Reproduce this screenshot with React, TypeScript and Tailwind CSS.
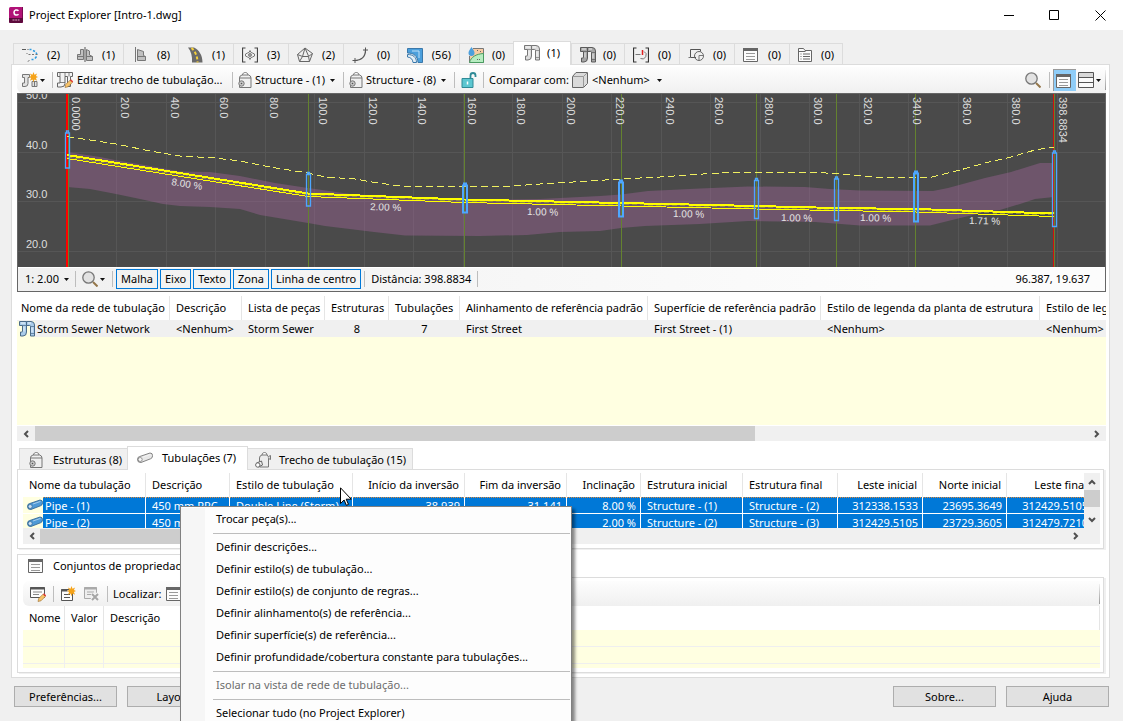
import type { ReactNode } from 'react';

/* ---------- icons ---------- */

type SvgProps = { children: ReactNode; className?: string };

function Icon({ children, className = 'h-4 w-4' }: SvgProps) {
  return (
    <svg viewBox="0 0 16 16" fill="none" className={`shrink-0 ${className}`} aria-hidden="true">
      {children}
    </svg>
  );
}

const AlignmentIcon = () => (
  <Icon>
    <path d="M0 2.500h4M5.500 2.500h1" stroke="#5a5a5a" />
    <path d="M7.500 2.500h2M11 3.500l2 1M14 5.500l1 2M14.500 9.500l-1.500 2M11.500 12.500h-2" stroke="#2d9be0" strokeWidth="1.500" />
    <path d="M6.500 7.500h9M7.500 13.500l-2 1M4.500 6.500h1" stroke="#777" strokeDasharray="2 1.500" />
  </Icon>
);

const AssemblyIcon = () => (
  <Icon>
    <path d="M8 0v15" stroke="#555" />
    <path d="M6.500 2.500h-3v5h-3v5h6zM9.500 2.500l3 1.500v4l3 1.500v4h-6z" fill="#c0c0c0" stroke="#777" />
    <path d="M.5 9.500h6M9.500 9.500h6" stroke="#777" />
  </Icon>
);

const SubassemblyIcon = () => (
  <Icon>
    <path d="M3.500 0v15" stroke="#777" />
    <path d="M5.500 2.500l6 2v4l2 1v4h-8z" fill="#c0c0c0" stroke="#777" />
    <path d="M5.500 9.500h8" stroke="#777" />
  </Icon>
);

const CorridorIcon = () => (
  <Icon>
    <path d="M1 .500h6C12 3 15.500 8 15.500 15.500H5C5.500 9 4 4 1 .500z" fill="#6a6a6a" />
    <path d="M4.500 1c3.500 3 6 8 6 14.500" stroke="#f5cf3a" strokeWidth="2" strokeDasharray="3 2" />
  </Icon>
);

const IntersectionIcon = () => (
  <Icon>
    <path d="M3.500 1h-3v14h3M12.500 1h3v14h-3" stroke="#444" strokeWidth="1.200" />
    <path d="M8 3.500l1 2 1.500.5 2 1v2l-2 1-1.500.5-1 2-1-2-1.500-.5-2-1V7l2-1L7 5.500z" stroke="#777" />
    <circle cx="8" cy="8" r="1.300" stroke="#555" />
  </Icon>
);

const SurfaceIcon = () => (
  <Icon>
    <path d="M8 1l7.500 5.500L12.500 14.500h-10L.5 7.500zM8 1L5.500 9.500M5.500 9.500L.5 7.500M8 1l3.500 8M5.500 9.500h6l4-3M5.500 9.500l-3 5M11.500 9.500l1 5" stroke="#666" />
  </Icon>
);

const CurveIcon = () => (
  <Icon>
    <path d="M3 13.500C9 13.500 13.500 10 13.500 3" stroke="#555" strokeWidth="1.200" />
    <path d="M.5 13.500h5M3 11v5M11 3h5M13.500.500v5" stroke="#555" />
  </Icon>
);

const CatchmentIcon = () => (
  <Icon>
    <path d="M.5 1.500h15v14h-4.500C10.500 9 7 6 .5 6z" fill="#4b9fdc" stroke="#3a78aa" />
    <path d="M.5 7.500C6 7.500 9.500 10 9.500 15.500H6C5.500 12 4 10.500.5 10z" fill="#e4eef6" stroke="#3a78aa" />
    <path d="M5 4h7v7" stroke="#bfe0f7" />
  </Icon>
);

const WaterIcon = () => (
  <Icon>
    <path d="M5 1.500h10.500v14H1.500V9" fill="#f7cba4" stroke="#777" />
    <path d="M1.500 15.500C3 10 8 7 15.500 6.500v9z" fill="#b6ecc0" stroke="#4a9a60" />
    <path d="M9 3.500h1M12 4.500h1M9 12.500h3" stroke="#666" strokeDasharray="1 1" />
    <path d="M3.500 0C1.500 3 .5 4.200.5 6a3 3 0 006 0C6.500 4.200 5.500 3 3.500 0z" fill="#4b9fdc" />
  </Icon>
);

function PipeNetIcon({ fill, stroke, className }: { fill: string; stroke: string; className?: string }) {
  return (
    <Icon className={className}>
      <path d="M.5.500h7v10.500q0 4-3.500 4H1.500v-4H3q.5 0 .5-.5V4.500H.5z" fill={fill} stroke={stroke} />
      <path d="M7.500.500H12q3.500 0 3.500 3.500v11h-4V5.500q0-1-1-1h-3z" fill={fill} stroke={stroke} />
      <path d="M3.500 4.500h4M11.500 5.500h4M11.500 12.500h4" stroke={stroke} strokeWidth=".7" />
      <path d="M5 5.500v5M13 6.500v5M2 2h4M9 2h3" stroke="#fff" strokeOpacity=".8" />
    </Icon>
  );
}

const BracketRunIcon = () => (
  <Icon>
    <path d="M3.500 1h-3v14h3M12.500 1h3v14h-3" stroke="#333" strokeWidth="1.200" />
    <path d="M2.500 7.500h5M11 4.500a3.800 3.800 0 11-3.500 7" stroke="#777" />
    <path d="M9.500 3v5" stroke="#e02020" strokeWidth="1.500" />
  </Icon>
);

const ShapesIcon = () => (
  <Icon>
    <path d="M8 10.500H2.500v-8h10v2" stroke="#555" />
    <circle cx="11" cy="9" r="4.500" stroke="#666" />
    <path d="M.5 10.500h2M11 8.500v5M11 8.500h4.500" stroke="#777" />
  </Icon>
);

const ListIcon = ({ className }: { className?: string }) => (
  <Icon className={className}>
    <path d="M.5 1.500h14v13H.5z" fill="#fcfcfc" stroke="#666" />
    <path d="M0 1h15v3H0z" fill="#666" />
    <path d="M3 6.500h9M3 9.500h9M3 12.500h9" stroke="#999" />
  </Icon>
);

const FolderListIcon = () => (
  <Icon>
    <path d="M.5 14.500V1.500h5l1.500 2h6.500v11z" fill="#fcfcfc" stroke="#666" />
    <path d="M.5 4.500h7" stroke="#666" />
    <path d="M2.500 7h1M5 7h7M2.500 9.500h1M5 9.500h7M2.500 12h1M5 12h7" stroke="#666" />
  </Icon>
);

const Star = () => (
  <path
    d="M11.500 0l1 2.700 2.600-1.200-1.200 2.600 2.100 1-2.100 1 1.200 2.600-2.600-1.200-1 2.700-1-2.700-2.600 1.200 1.200-2.600L7 5.100l2.100-1L7.900 1.500l2.600 1.200z"
    fill="#f5a31a"
  />
);

const Pencil = () => (
  <>
    <path d="M8 15.500l.7-3L13 8.200l2.300 2.300-4.300 4.300z" fill="#f7c46a" stroke="#9a6a28" strokeWidth=".6" />
    <path d="M13 8.200l1-1 2.300 2.300-1 1z" fill="#e53935" />
  </>
);

const NewNetworkIcon = () => (
  <Icon>
    <path d="M.5 2.500h7v3H6v6q0 3-3 3H.5V11h2V5.500h-2z" fill="#e2e2e2" stroke="#777" />
    <path d="M10 9.500h5v5h-5zM12.500 9.500v5" fill="#e2e2e2" stroke="#777" />
    <Star />
  </Icon>
);

const EditRunIcon = () => (
  <Icon>
    <path d="M.5.500h15v4h-2v10h-3v-10H8v7q0 3.500-4 3.500H.5v-4H3V4.500H.5z" fill="#f3f3f3" stroke="#666" />
    <path d="M3 .500v4M8 .500v4M12 .500v4M3 10.500h5" stroke="#666" strokeWidth=".8" />
    <Pencil />
  </Icon>
);

const StructureIcon = () => (
  <Icon>
    <path d="M5.500 3C5.500-.3 11 -.3 11 3" stroke="#777" fill="#fff" />
    <path d="M2.500 6q0-2.500 2.500-3h6.500q2.500.5 2.500 3v9.500h-11.500z" fill="#f0f0f0" stroke="#777" />
    <path d="M2.500 6h11.500" stroke="#777" />
    <circle cx="4.500" cy="11.500" r="2.700" fill="#c9c9c9" stroke="#777" />
    <circle cx="4.500" cy="11.500" r=".8" fill="#555" />
  </Icon>
);

const RunIcon = () => (
  <Icon>
    <path d="M7 3c0-3.300 5-3.300 5 0" stroke="#777" fill="#fff" />
    <path d="M4.500 6q0-2.500 2.500-3h5q1.500.5 1.500 3v9h-9z" fill="#ececec" stroke="#777" />
    <path d="M13.500 4.500l2-1v4l-2-1" fill="#ddd" stroke="#777" />
    <path d="M1.500 11l5-2 1 4-4 2z" fill="#eee" stroke="#666" />
    <circle cx="2.800" cy="13" r="2.200" fill="#fff" stroke="#666" />
  </Icon>
);

const PipeIcon = ({ fill, stroke }: { fill: string; stroke: string }) => (
  <Icon>
    <path d="M2.800 6.500L13 3q2.600 0 2.600 2.600t-2.100 3.200L4 12.500Q.5 12.700.5 9.700T2.800 6.500z" fill={fill} stroke={stroke} strokeWidth=".8" />
    <circle cx="3.200" cy="9.500" r="2" fill="#fff" fillOpacity=".7" stroke={stroke} strokeWidth=".6" />
    <path d="M6 7l7.500-2.600" stroke="#fff" strokeOpacity=".5" />
  </Icon>
);

const LockIcon = () => (
  <Icon>
    <path d="M9.500 6V3.500a2.500 2.500 0 015 0V5" stroke="#2f8a96" strokeWidth="1.800" />
    <path d="M1 6.500h11v9H1z" fill="#5cc6d0" stroke="#2f8a96" />
    <path d="M6.500 9.500v3" stroke="#fff" strokeWidth="1.500" />
  </Icon>
);

const CubeIcon = () => (
  <Icon>
    <path d="M.5 4.500l3.500-4h11.500v11l-4 4H.5z" fill="#dadada" stroke="#666" />
    <path d="M.8 4.500h10.700l4-4M11.500 4.500v11" stroke="#999" />
  </Icon>
);

const SearchIcon = () => (
  <Icon>
    <path d="M11 11l4.500 4.500" stroke="#94764a" strokeWidth="2" />
    <circle cx="6.500" cy="6.500" r="5.700" fill="#e2e2e2" stroke="#777" strokeWidth="1.300" />
  </Icon>
);

const RowsIcon = () => (
  <Icon>
    <path d="M.5.500h15v15H.5z" fill="#fafafa" stroke="#555" />
    <path d="M1 1h14v4.500H1z" fill="#d8d8d8" />
    <path d="M.5 5.500h15M.5 10.500h15" stroke="#555" />
  </Icon>
);

const EditListIcon = () => (
  <Icon>
    <path d="M.5 1.500h14v10H.5z" fill="#fcfcfc" stroke="#555" />
    <path d="M.5 1h14v2.500H.5z" fill="#555" />
    <path d="M3 6h9M3 8.500h6" stroke="#888" />
    <Pencil />
  </Icon>
);

const NewListIcon = () => (
  <Icon>
    <path d="M1.500 3.500h11v11h-11z" fill="#fcfcfc" stroke="#555" />
    <path d="M1.500 3h6v2.500h-6z" fill="#555" />
    <path d="M4 8.500h6M4 11.500h6" stroke="#555" />
    <Star />
  </Icon>
);

const DeleteListIcon = () => (
  <Icon>
    <path d="M.5 1.500h12v11H.5z" fill="#eee" stroke="#aaa" />
    <path d="M.5 1h12v2.500H.5z" fill="#aaa" />
    <path d="M3 6h7M3 8.500h4" stroke="#aaa" />
    <path d="M8 8l6 6M14 8l-6 6" stroke="#f4f4f4" strokeWidth="4" />
    <path d="M8 8l6 6M14 8l-6 6" stroke="#a5a5a5" strokeWidth="2" />
  </Icon>
);

const Caret = () => (
  <svg viewBox="0 0 5 3" className="pointer-events-none h-[3px] w-[5px] shrink-0" aria-hidden="true">
    <path d="M0 0h5L2.500 3z" fill="#111" />
  </svg>
);

function Chevron({ d }: { d: string }) {
  return (
    <svg viewBox="0 0 8 8" className="h-2 w-2" fill="none" aria-hidden="true">
      <path d={d} stroke="#505050" strokeWidth="2" />
    </svg>
  );
}

const Divider = () => <span className="block h-4 w-px shrink-0 bg-[#bdbdbd]" />;

/* ---------- title bar ---------- */

function TitleBar() {
  return (
    <header className="flex h-[30px] shrink-0 items-center bg-white pl-[9px]">
      <svg viewBox="0 0 14 16" className="h-4 w-3.5 shrink-0" aria-hidden="true">
        <rect width="14" height="16" rx="1.500" fill="#b01277" />
        <path d="M0 11h14v3.500a1.500 1.500 0 01-1.500 1.500h-11A1.500 1.500 0 010 14.500z" fill="#5c0a3c" />
        <path d="M13 0h1v11h-1z" fill="#7a0a50" />
        <path d="M9.500 3.800C8 2.300 5 2.800 5 5.500s3 3.200 4.500 1.700" fill="none" stroke="#fff" strokeWidth="1.600" />
        <path d="M3.500 13h7" stroke="#d9a8c6" strokeDasharray="2 .7" />
      </svg>
      <h1 className="ml-1.5 flex-1">Project Explorer [Intro-1.dwg]</h1>
      <button aria-label="Minimizar" className="flex h-full w-[46px] items-center justify-center">
        <svg viewBox="0 0 11 11" className="h-[11px] w-[11px]"><path d="M1 5.500h10" stroke="#000" /></svg>
      </button>
      <button aria-label="Maximizar" className="flex h-full w-[46px] items-center justify-center">
        <svg viewBox="0 0 11 11" className="h-[11px] w-[11px]"><path d="M.5.500h9v9h-9z" fill="none" stroke="#000" /></svg>
      </button>
      <button aria-label="Fechar" className="flex h-full w-[46px] items-center justify-center">
        <svg viewBox="0 0 11 11" className="h-[11px] w-[11px]"><path d="M.5.500l10 10M10.500.500l-10 10" stroke="#000" /></svg>
      </button>
    </header>
  );
}

/* ---------- category tabs ---------- */

const pipeGrey = <PipeNetIcon fill="#dcdcdc" stroke="#777" />;
const pipeDark = <PipeNetIcon fill="#a6a6a6" stroke="#5a5a5a" />;

const categories: { name: string; count: number; icon: ReactNode; width: string }[] = [
  { name: 'Alinhamentos', count: 2, icon: <AlignmentIcon />, width: 'w-[55px]' },
  { name: 'Montagens', count: 1, icon: <AssemblyIcon />, width: 'w-[55px]' },
  { name: 'Submontagens', count: 8, icon: <SubassemblyIcon />, width: 'w-[55px]' },
  { name: 'Corredores', count: 1, icon: <CorridorIcon />, width: 'w-[55px]' },
  { name: 'Interseções', count: 3, icon: <IntersectionIcon />, width: 'w-[55px]' },
  { name: 'Superfícies', count: 2, icon: <SurfaceIcon />, width: 'w-[55px]' },
  { name: 'Linhas de recurso', count: 0, icon: <CurveIcon />, width: 'w-[55px]' },
  { name: 'Áreas', count: 56, icon: <CatchmentIcon />, width: 'w-[61px]' },
  { name: 'Bacias', count: 0, icon: <WaterIcon />, width: 'w-[54px]' },
  { name: 'Redes de tubulação', count: 1, icon: pipeGrey, width: 'w-[58px]' },
  { name: 'Redes de pressão', count: 0, icon: pipeDark, width: 'w-[53px]' },
  { name: 'Trechos', count: 0, icon: <BracketRunIcon />, width: 'w-[55px]' },
  { name: 'Formas', count: 0, icon: <ShapesIcon />, width: 'w-[55px]' },
  { name: 'Conjuntos', count: 0, icon: <ListIcon />, width: 'w-[55px]' },
  { name: 'Pastas', count: 0, icon: <FolderListIcon />, width: 'w-[54px]' },
];

function CategoryTabs() {
  return (
    <div role="tablist" className="flex shrink-0 items-end pt-[11px] pl-[2px]">
      {categories.map((c) =>
        c.name === 'Redes de tubulação' ? (
          <button key={c.name} role="tab" aria-selected="true" aria-label={c.name}
            className={`relative -mb-px flex h-6 items-center justify-between border-x border-t border-[#dcdcdc] bg-white pr-2.5 pb-0.5 pl-2.5 ${c.width}`}>
            {c.icon}
            <span>({c.count})</span>
          </button>
        ) : (
          <button key={c.name} role="tab" aria-selected="false" aria-label={c.name}
            className={`flex h-[21px] items-center justify-between border-t border-l border-[#dcdcdc] pt-0.5 pr-2 pl-2 last:border-r ${c.width}`}>
            {c.icon}
            <span>({c.count})</span>
          </button>
        ),
      )}
    </div>
  );
}

/* ---------- toolbar ---------- */

function Picker({ id, label, value, width }: { id: string; label: string; value: string; width: string }) {
  return (
    <span className="flex items-center">
      <select id={id} aria-label={label} className={`appearance-none bg-transparent ${width}`}>
        <option>{value}</option>
      </select>
      <Caret />
    </span>
  );
}

function MainToolbar() {
  return (
    <div className="flex h-[26px] shrink-0 items-center rounded-l-md bg-linear-to-b from-[#fdfdfd] to-[#f0f0f0] pl-[5px]">
      <div className="flex w-[30px] items-center">
        <button aria-label="Nova rede" className="flex items-center gap-0.5"><NewNetworkIcon /><Caret /></button>
      </div>
      <Divider />
      <div className="flex w-[179px] items-center pl-1">
        <button className="flex items-center gap-1 whitespace-nowrap"><EditRunIcon />Editar trecho de tubulação...</button>
      </div>
      <Divider />
      <div className="flex w-[110px] items-center gap-0.5 pl-1"><StructureIcon /><Picker id="from" label="Estrutura inicial" value="Structure - (1)" width="w-[75px]" /></div>
      <Divider />
      <div className="flex w-[110px] items-center gap-0.5 pl-1"><StructureIcon /><Picker id="to" label="Estrutura final" value="Structure - (8)" width="w-[75px]" /></div>
      <Divider />
      <div className="flex w-7 items-center pl-1.5"><button aria-label="Bloquear"><LockIcon /></button></div>
      <Divider />
      <label htmlFor="compare" className="w-[88px] pl-[5px] whitespace-nowrap">Comparar com:</label>
      <div className="flex items-center gap-1"><CubeIcon /><Picker id="compare" label="Comparar com" value="<Nenhum>" width="w-[65px]" /></div>
      <button aria-label="Pesquisar" className="ml-auto"><SearchIcon /></button>
      <span className="ml-2"><Divider /></span>
      <button aria-label="Lista" aria-pressed="true" className="ml-[3px] flex h-[22px] w-[23px] items-center justify-center border-t border-l border-[#999] bg-[#8fcdf8] pr-0.5"><ListIcon /></button>
      <button aria-label="Layout" className="ml-0.5 flex items-center gap-0.5"><RowsIcon /><Caret /></button>
      <span className="ml-1 h-5 w-px bg-linear-to-b from-[#f0f0f0] to-[#999]" />
    </div>
  );
}

/* ---------- profile view ---------- */

const gridX = [116, 166, 215, 265, 314, 364, 413, 463, 512, 562, 611, 661, 710, 760, 809, 859, 908, 958, 1007, 1057];
const gridY = [102, 152, 201, 251];
const greenX = [308, 464, 621, 756, 836, 915];
const stations: [number, string][] = [
  [72, '0.0000'], [121, '20.0'], [171, '40.0'], [220, '60.0'], [270, '80.0'], [319, '100.0'], [369, '120.0'],
  [418, '140.0'], [468, '160.0'], [517, '180.0'], [567, '200.0'], [616, '220.0'], [666, '240.0'], [715, '260.0'],
  [765, '280.0'], [814, '300.0'], [864, '320.0'], [913, '340.0'], [963, '360.0'], [1012, '380.0'], [1059, '398.8834'],
];
const elevations: [number, string][] = [[99, '50.0'], [149, '40.0'], [198, '30.0'], [248, '20.0']];
const structures: { x: number; top: number; bottom: number; weight: number }[] = [
  { x: 67.5, top: 133, bottom: 168, weight: 1.3 },
  { x: 308.5, top: 174.5, bottom: 206, weight: 1.3 },
  { x: 465, top: 185.5, bottom: 212.5, weight: 2 },
  { x: 621, top: 182.5, bottom: 216.5, weight: 2 },
  { x: 756.5, top: 180.5, bottom: 218.5, weight: 1.3 },
  { x: 836.5, top: 179, bottom: 220.5, weight: 1.3 },
  { x: 916, top: 173.5, bottom: 221.5, weight: 2 },
  { x: 1054.5, top: 153, bottom: 226.5, weight: 1.3 },
];
const slopes: [number, number, number, string][] = [
  [171, 185, 9, '8.00 %'], [370, 210, 2, '2.00 %'], [527, 215, 1, '1.00 %'], [673, 217, 1, '1.00 %'],
  [781, 221, 1, '1.00 %'], [860, 221, 1, '1.00 %'], [969, 224, 1, '1.71 %'],
];

function ProfileView() {
  return (
    <svg viewBox="18 94 1087 173" preserveAspectRatio="xMinYMin slice" className="block h-[173px] w-full bg-[#4a4a4a]" role="img" aria-label="Perfil da rede">
      <g stroke="#565656" shapeRendering="crispEdges">
        {gridX.map((x) => <path key={x} d={`M${x + 0.5} 94v173`} />)}
        {gridY.map((y) => <path key={y} d={`M18 ${y + 0.5}h1087`} />)}
      </g>
      <path
        d="M67 152L100 157 115 160 150 166 180 171.500 210 172 240 176 275 183 308 188 350 194 400 197 464 200 540 199 600 196 621 194.500 648 191 700 188.500 748 186.500 805 187 830 189 860 190.500 933 191 948 188 985 178 1011 172 1040 163 1054 163 1054 197 1035 199 1020 204 1000 210 985 212 948 221 930 225.500 860 225.500 815 222 748 221 700 224 645 226 621 228 600 231 560 232 527 235 480 236 405 235.500 374 232 325 226 308 223 260 215 240 209 210 207 180 206 163 204 140 199 116 194 90 189 67 187z"
        fill="#a06399" fillOpacity=".42"
      />
      <g stroke="#64822f" shapeRendering="crispEdges">
        {greenX.map((x) => <path key={x} d={`M${x + 0.5} 94v173`} />)}
        <path d="M68.500 94v173M1054.500 94v173" />
      </g>
      <path d="M66.500 94v173M67.500 94v173" stroke="#f00" shapeRendering="crispEdges" />
      <path d="M1053.500 94v173" stroke="#d01010" shapeRendering="crispEdges" />
      <g fill="none" shapeRendering="crispEdges">
        <path
          d="M67 136.500L116 144 150 151 180 156 215 158 240 161 270 167 308 173 325 177 355 179 372 182 400 186 465 187 512 186 540 184 590 181 621 179 660 177 710 173.500 748 172 812 172 840 174 873 177 932 177 960 170 985 163 1011 157 1035 150 1054 147"
          stroke="#f0f060" strokeDasharray="7 4"
        />
        <path d="M67 155L308 193.500 464 199.500 621 203 756 206 836 208 916 209 1054 213.500" stroke="#ff0" strokeWidth="2" />
        <path d="M67 158.500L308 196.500 464 202.500 621 206 756 209 836 210.500 916 212 1054 216.500" stroke="#ff0" />
        <path d="M67 157L308 195 464 201 621 204.500 756 207.500 836 209.500 916 210.500 1054 215" stroke="#8a8a40" strokeDasharray="5 3" />
      </g>
      <g fill="none" stroke="#4da6ff">
        {structures.map((s) => (
          <path
            key={s.x}
            strokeWidth={s.weight}
            d={`M${s.x - 2} ${s.top}h4V${s.bottom}h-4zM${s.x - 1} ${s.top}v-2h2v2`}
          />
        ))}
      </g>
      <g fill="#dedede" fontFamily="Liberation Sans, sans-serif" fontSize="11">
        {elevations.map(([y, t]) => <text key={t} x="26" y={y}>{t}</text>)}
        {stations.map(([x, t]) => <text key={t} transform={`translate(${x} 97) rotate(90)`}>{t}</text>)}
      </g>
      <g fill="#e4e4e4" fontFamily="Liberation Sans, sans-serif" fontSize="10">
        {slopes.map(([x, y, r, t]) => <text key={x} transform={`translate(${x} ${y}) rotate(${r})`}>{t}</text>)}
      </g>
    </svg>
  );
}

const toggles = ['Malha', 'Eixo', 'Texto', 'Zona', 'Linha de centro'];

function ProfileStatus() {
  return (
    <div className="flex h-6 items-center border-t border-white bg-linear-to-r from-[#f0f0f0] to-[#fcfcfc] to-80% pb-px pl-[7px]">
      <div className="flex w-[50px] items-center"><Picker id="scale" label="Escala vertical" value="1: 2.00" width="w-[39px]" /></div>
      <Divider />
      <div className="flex w-9 items-center pl-1.5"><button aria-label="Zoom" className="flex items-center gap-0.5"><SearchIcon /><Caret /></button></div>
      <Divider />
      <div className="ml-[3px] flex gap-0.5">
        {toggles.map((t) => (
          <button key={t} aria-pressed="true" className="h-5 border border-[#0078d7] px-1 whitespace-nowrap">{t}</button>
        ))}
      </div>
      <span className="ml-[3px]"><Divider /></span>
      <span className="ml-1.5">Distância: 398.8834</span>
      <span className="ml-1.5"><Divider /></span>
      <span className="ml-auto pr-[15px]">96.387, 19.637</span>
    </div>
  );
}

/* ---------- network table ---------- */

const networkHeads = [
  'Descrição', 'Lista de peças', 'Estruturas', 'Tubulações', 'Alinhamento de referência padrão',
  'Superfície de referência padrão', 'Estilo de legenda da planta de estrutura', 'Estilo de legenda da planta de tubulação',
];

function NetworkTable() {
  return (
    <div className="mt-1 flex min-h-0 flex-1 flex-col">
      <div className="min-h-0 flex-1 overflow-hidden bg-[#ffffe1]">
        <table className="w-[1230px] table-fixed border-separate border-spacing-0 text-left whitespace-nowrap">
          <colgroup>
            <col className="w-[153px]" /><col className="w-[72px]" /><col className="w-[83px]" /><col className="w-16" />
            <col className="w-[71px]" /><col className="w-[188px]" /><col className="w-[173px]" /><col className="w-[219px]" /><col />
          </colgroup>
          <thead>
            <tr className="h-6 bg-white">
              <th className="border-r border-[#e5e5e5] p-0 pl-1 font-normal">Nome da rede de tubulação</th>
              {networkHeads.map((h) => (
                <th key={h} className="border-r border-[#e5e5e5] p-0 pl-1.5 font-normal">{h}</th>
              ))}
            </tr>
          </thead>
          <tbody>
            <tr className="h-[17px] bg-[#f0f0f0]">
              <td className="p-0">
                <span className="flex items-center gap-0.5 bg-linear-to-r from-[#ffffe1] from-[18px] to-[#f0f0f0] to-[18px] pl-0.5"><PipeNetIcon fill="#a9cbea" stroke="#4a6a88" /><span>Storm Sewer Network</span></span>
              </td>
              <td className="p-0 pl-1.5">&lt;Nenhum&gt;</td>
              <td className="p-0 pl-1.5">Storm Sewer</td>
              <td className="p-0 text-center">8</td>
              <td className="p-0 text-center">7</td>
              <td className="p-0 pl-1.5">First Street</td>
              <td className="p-0 pl-1.5">First Street - (1)</td>
              <td className="p-0 pl-1.5">&lt;Nenhum&gt;</td>
              <td className="p-0 pl-1.5">&lt;Nenhum&gt;</td>
            </tr>
          </tbody>
        </table>
      </div>
      <div className="mt-px flex h-[15px] shrink-0 items-center bg-[#f0f0f0]">
        <button aria-label="Rolar para a esquerda" className="flex h-full w-[18px] items-center justify-center"><Chevron d="M6 1L3 4l3 3" /></button>
        <div className="flex h-full flex-1"><div className="h-full w-[68.4%] bg-[#cdcdcd]" /></div>
        <button aria-label="Rolar para a direita" className="flex h-full w-[18px] items-center justify-center"><Chevron d="M2 1l3 3-3 3" /></button>
      </div>
    </div>
  );
}

/* ---------- pipes table ---------- */

const pipeRows = [
  ['Pipe - (1)', '450 mm RPC', 'Double Line (Storm)', '38.939', '31.141', '8.00 %', 'Structure - (1)', 'Structure - (2)', '312338.1533', '23695.3649', '312429.5105'],
  ['Pipe - (2)', '450 mm RPC', 'Double Line (Storm)', '31.111', '29.880', '2.00 %', 'Structure - (2)', 'Structure - (3)', '312429.5105', '23729.3605', '312479.7210'],
];
const pipeHeads = ['Nome da tubulação', 'Descrição', 'Estilo de tubulação', 'Início da inversão', 'Fim da inversão', 'Inclinação', 'Estrutura inicial', 'Estrutura final', 'Leste inicial', 'Norte inicial', 'Leste final'];
const rightAligned = [3, 4, 5, 8, 9, 10];
const focusLine = 'bg-[repeating-linear-gradient(90deg,#e08a3c_0_1px,#0078d7_1px_2px)] bg-size-[100%_1px] bg-no-repeat';

function PipesTable() {
  return (
    <div className="h-[55px] flex-1 overflow-hidden">
      <table className="w-[1070px] table-fixed border-separate border-spacing-0 text-left whitespace-nowrap">
        <colgroup>
          <col className="w-[123px]" /><col className="w-[84px]" /><col className="w-[123px]" /><col className="w-28" />
          <col className="w-[102px]" /><col className="w-[74px]" /><col className="w-[102px]" /><col className="w-[95px]" />
          <col className="w-[85px]" /><col className="w-[84px]" /><col />
        </colgroup>
        <thead>
          <tr className="h-6">
            {pipeHeads.map((h, i) => (
              <th key={h} className={`border-r border-[#e5e5e5] p-0 font-normal ${rightAligned.includes(i) ? 'pr-[5px] text-right' : 'pl-1.5'}`}>{h}</th>
            ))}
          </tr>
        </thead>
        <tbody className="text-white">
          {pipeRows.map((row, r) => (
            <tr key={row[0]} className="h-[17px] bg-[#0078d7] leading-[18px]">
              {row.map((cell, i) =>
                i === 0 ? (
                  <td key={i} className="border-r border-b border-white p-0">
                    <span className="flex h-4">
                      <span className="flex w-5 items-center justify-end bg-[#ffffe1]"><PipeIcon fill="#4f9ad6" stroke="#2b5f8e" /></span>
                      <span className={`flex-1 pl-0.5 ${r === 0 ? focusLine : ''}`}>{cell}</span>
                    </span>
                  </td>
                ) : (
                  <td key={i} className="border-r border-b border-white p-0">
                    <span className={`block h-4 ${r === 0 ? focusLine : ''} ${rightAligned.includes(i) ? 'pr-1 text-right' : 'pl-1.5'}`}>{cell}</span>
                  </td>
                ),
              )}
            </tr>
          ))}
        </tbody>
      </table>
    </div>
  );
}

function PipesPanel() {
  return (
    <section className="mt-[5px] mr-[2px] shrink-0">
      <div role="tablist" className="flex items-end pl-[2px]">
        <button role="tab" aria-selected="false" className="flex h-[21px] w-[108px] items-center border-t border-l border-[#dcdcdc] bg-[#f0f0f0] pt-px pl-2 whitespace-nowrap">
          <StructureIcon /><span className="ml-[9px]">Estruturas (8)</span>
        </button>
        <button role="tab" aria-selected="true" className="relative -mb-px flex h-6 w-[121px] items-center border-x border-t border-[#dcdcdc] bg-white pb-0.5 pl-[9px] whitespace-nowrap">
          <PipeIcon fill="#e8e8e8" stroke="#666" /><span className="ml-[9px]">Tubulações (7)</span>
        </button>
        <button role="tab" aria-selected="false" className="flex h-[21px] w-[165px] items-center border-t border-r border-[#dcdcdc] bg-[#f0f0f0] pt-px pl-[7px] whitespace-nowrap">
          <RunIcon /><span className="ml-2">Trecho de tubulação (15)</span>
        </button>
      </div>
      <div className="border border-[#dcdcdc] pt-[3px] pr-[3px] pb-1 pl-[5px] shadow-[2px_1px_0_#f0f0f0]">
        <div className="flex">
          <PipesTable />
          <div className="flex w-4 flex-col items-center bg-[#f0f0f0]">
            <button aria-label="Rolar para cima" className="flex h-[17px] w-full items-center justify-center"><Chevron d="M1 6l3-3 3 3" /></button>
            <div className="h-[17px] w-full bg-[#cdcdcd]" />
            <button aria-label="Rolar para baixo" className="mt-1 flex h-[17px] w-full items-center justify-center"><Chevron d="M1 2l3 3 3-3" /></button>
          </div>
        </div>
        <div className="flex h-4 items-center bg-[#f0f0f0] pr-4">
          <button aria-label="Rolar para a esquerda" className="flex h-full w-[17px] items-center justify-center"><Chevron d="M6 1L3 4l3 3" /></button>
          <div className="flex h-[15px] flex-1"><div className="h-full w-1/2 bg-[#cdcdcd]" /></div>
          <button aria-label="Rolar para a direita" className="flex h-full w-[17px] items-center justify-center"><Chevron d="M2 1l3 3-3 3" /></button>
        </div>
      </div>
    </section>
  );
}

/* ---------- property sets ---------- */

function PropertySets() {
  return (
    <section className="mt-[5px] mr-[2px] shrink-0">
      <div role="tablist" className="flex">
        <button role="tab" aria-selected="true" className="relative -mb-px flex h-6 w-[200px] items-center border-x border-t border-[#dcdcdc] bg-white pb-0.5 pl-2.5 whitespace-nowrap">
          <ListIcon /><span className="ml-[9px]">Conjuntos de propriedades</span>
        </button>
      </div>
      <div className="border border-[#dcdcdc] pt-[3px] pr-[3px] pb-1 pl-[5px] shadow-[2px_1px_0_#f0f0f0]">
        <div className="flex h-[25px] items-center rounded-l-md bg-linear-to-b from-[#fdfdfd] to-[#f0f0f0] pl-[7px]">
          <button aria-label="Editar"><EditListIcon /></button>
          <span className="ml-[7px]"><Divider /></span>
          <button aria-label="Novo" className="ml-1.5"><NewListIcon /></button>
          <button aria-label="Excluir" disabled className="ml-2"><DeleteListIcon /></button>
          <span className="ml-[7px]"><Divider /></span>
          <span className="w-[58px] pl-[5px]">Localizar:</span>
          <button aria-label="Localizar"><ListIcon /></button>
          <span className="ml-auto h-5 w-px bg-linear-to-b from-[#f0f0f0] to-[#999]" />
        </div>
        <div className="h-[62px] overflow-hidden">
          <table className="w-full table-fixed border-separate border-spacing-0 text-left">
            <colgroup><col className="w-[42px]" /><col className="w-[39px]" /><col /></colgroup>
            <thead>
              <tr className="h-6">
                {['Nome', 'Valor', 'Descrição'].map((h) => (
                  <th key={h} className="border-r border-[#e5e5e5] p-0 pl-1.5 font-normal">{h}</th>
                ))}
              </tr>
            </thead>
            <tbody>
              {[0, 1, 2].map((r) => (
                <tr key={r} className="h-[17px] bg-[#ffffe1]">
                  {[0, 1, 2].map((c) => <td key={c} className="border-r border-b border-[#efefef] p-0 last:border-r-0" />)}
                </tr>
              ))}
            </tbody>
          </table>
        </div>
      </div>
    </section>
  );
}

/* ---------- context menu ---------- */

const menuGroups: { items: string[]; disabled?: boolean }[] = [
  { items: ['Trocar peça(s)...'] },
  {
    items: [
      'Definir descrições...',
      'Definir estilo(s) de tubulação...',
      'Definir estilo(s) de conjunto de regras...',
      'Definir alinhamento(s) de referência...',
      'Definir superfície(s) de referência...',
      'Definir profundidade/cobertura constante para tubulações...',
    ],
  },
  { items: ['Isolar na vista de rede de tubulação...'], disabled: true },
  { items: ['Selecionar tudo (no Project Explorer)'] },
];

function ContextMenu() {
  return (
    <div role="menu" className="absolute top-[506px] left-[180px] w-[392px] border border-[#808080] bg-[#fdfdfd] py-px shadow-[3px_3px_3px_rgba(0,0,0,0.45)]">
      <div className="border-l-[24px] border-[#f6f6f6]">
        {menuGroups.map((g, i) => (
          <div key={i} className={i > 0 ? 'mt-[3px]' : ''}>
            {i > 0 && <div className="mr-px mb-[2px] ml-2 h-px bg-[#bdbdbd]" />}
            {g.items.map((t) => (
              <button key={t} role="menuitem" disabled={g.disabled}
                className="flex h-[22px] w-full items-center pl-[11px] whitespace-nowrap text-black disabled:text-[#6d6d6d]">
                {t}
              </button>
            ))}
          </div>
        ))}
      </div>
    </div>
  );
}

const MousePointer = () => (
  <svg viewBox="0 0 12 19" className="pointer-events-none absolute top-[487px] left-[340px] h-[19px] w-3" aria-hidden="true">
    <path d="M.5.800v15.700l3.600-3.500 2.300 5.300 2.100-.9-2.300-5.200h5z" fill="#fff" stroke="#000" />
  </svg>
);

const footerButton = 'h-[21px] w-[103px] border border-[#adadad] bg-[#e1e1e1] text-center';

export default function App() {
  return (
    <div className="relative flex h-screen flex-col overflow-hidden bg-[#f0f0f0] font-['Noto_Sans','Open_Sans',sans-serif] text-[11px] leading-4 text-black">
      <TitleBar />
      <main className="flex min-h-0 flex-1 flex-col pr-[13px] pl-[11px]">
        <CategoryTabs />
        <div className="flex min-h-0 flex-1 flex-col border border-[#dcdcdc] bg-white pt-[2px] pr-[3px] pb-1 pl-[5px]">
          <MainToolbar />
          <div className="shrink-0 border border-[#666]">
            <ProfileView />
            <ProfileStatus />
          </div>
          <NetworkTable />
          <PipesPanel />
          <PropertySets />
        </div>
      </main>
      <footer className="flex shrink-0 gap-2.5 pt-2 pr-[14px] pb-[14px] pl-[14px]">
        <button className={footerButton}>Preferências...</button>
        <button className={footerButton}>Layout...</button>
        <button className={`ml-auto ${footerButton}`}>Sobre...</button>
        <button className={footerButton}>Ajuda</button>
      </footer>
      <MousePointer />
      <ContextMenu />
    </div>
  );
}
